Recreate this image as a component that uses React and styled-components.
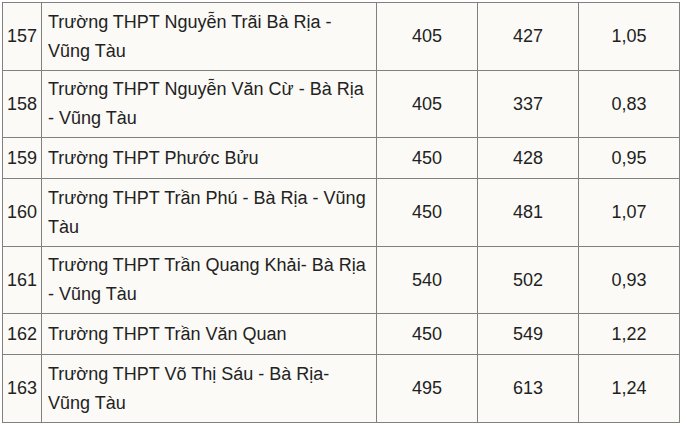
import React from "react";
import styled, { createGlobalStyle } from "styled-components";

const GlobalStyle = createGlobalStyle`
  html, body {
    margin: 0;
    padding: 0;
    background: #ffffff;
  }
  body {
    font-family: "Liberation Sans", Arial, sans-serif;
  }
`;

const rows = [
  { no: 157, name: "Trường THPT Nguyễn Trãi Bà Rịa - Vũng Tàu", a: "405", b: "427", c: "1,05" },
  { no: 158, name: "Trường THPT Nguyễn Văn Cừ - Bà Rịa - Vũng Tàu", a: "405", b: "337", c: "0,83" },
  { no: 159, name: "Trường THPT Phước Bửu", a: "450", b: "428", c: "0,95" },
  { no: 160, name: "Trường THPT Trần Phú - Bà Rịa - Vũng Tàu", a: "450", b: "481", c: "1,07" },
  { no: 161, name: "Trường THPT Trần Quang Khải- Bà Rịa - Vũng Tàu", a: "540", b: "502", c: "0,93" },
  { no: 162, name: "Trường THPT Trần Văn Quan", a: "450", b: "549", c: "1,22" },
  { no: 163, name: "Trường THPT Võ Thị Sáu - Bà Rịa- Vũng Tàu", a: "495", b: "613", c: "1,24" },
];

export default function App() {
  return (
    <>
      <GlobalStyle />
      <Wrapper>
        <Table>
          <colgroup>
            <Col $w={39} />
            <Col $w={335} />
            <Col $w={101} />
            <Col $w={101} />
            <Col $w={101} />
          </colgroup>
          <tbody>
            {rows.map((r) => (
              <Row key={r.no}>
                <NumCell>{r.no}</NumCell>
                <NameCell>{r.name}</NameCell>
                <NumCell>{r.a}</NumCell>
                <NumCell>{r.b}</NumCell>
                <NumCell>{r.c}</NumCell>
              </Row>
            ))}
          </tbody>
        </Table>
      </Wrapper>
    </>
  );
}

const Wrapper = styled.div`
  padding: 2px 0 0 2px;
`;

const Table = styled.table`
  width: 678px;
  table-layout: fixed;
  border-collapse: collapse;
  background: #fbfaf6;
  color: #222222;
  font-size: 18px;
`;

const Col = styled.col`
  width: ${(p) => p.$w}px;
`;

const Row = styled.tr`
  height: 41px;
`;

const NameCell = styled.td`
  border: 1px solid #808080;
  padding: 4.5px 6px 4px;
  line-height: 29px;
  vertical-align: middle;
  text-align: left;
`;

const NumCell = styled(NameCell)`
  padding: 4.5px 1px 4px;
  text-align: center;
`;
